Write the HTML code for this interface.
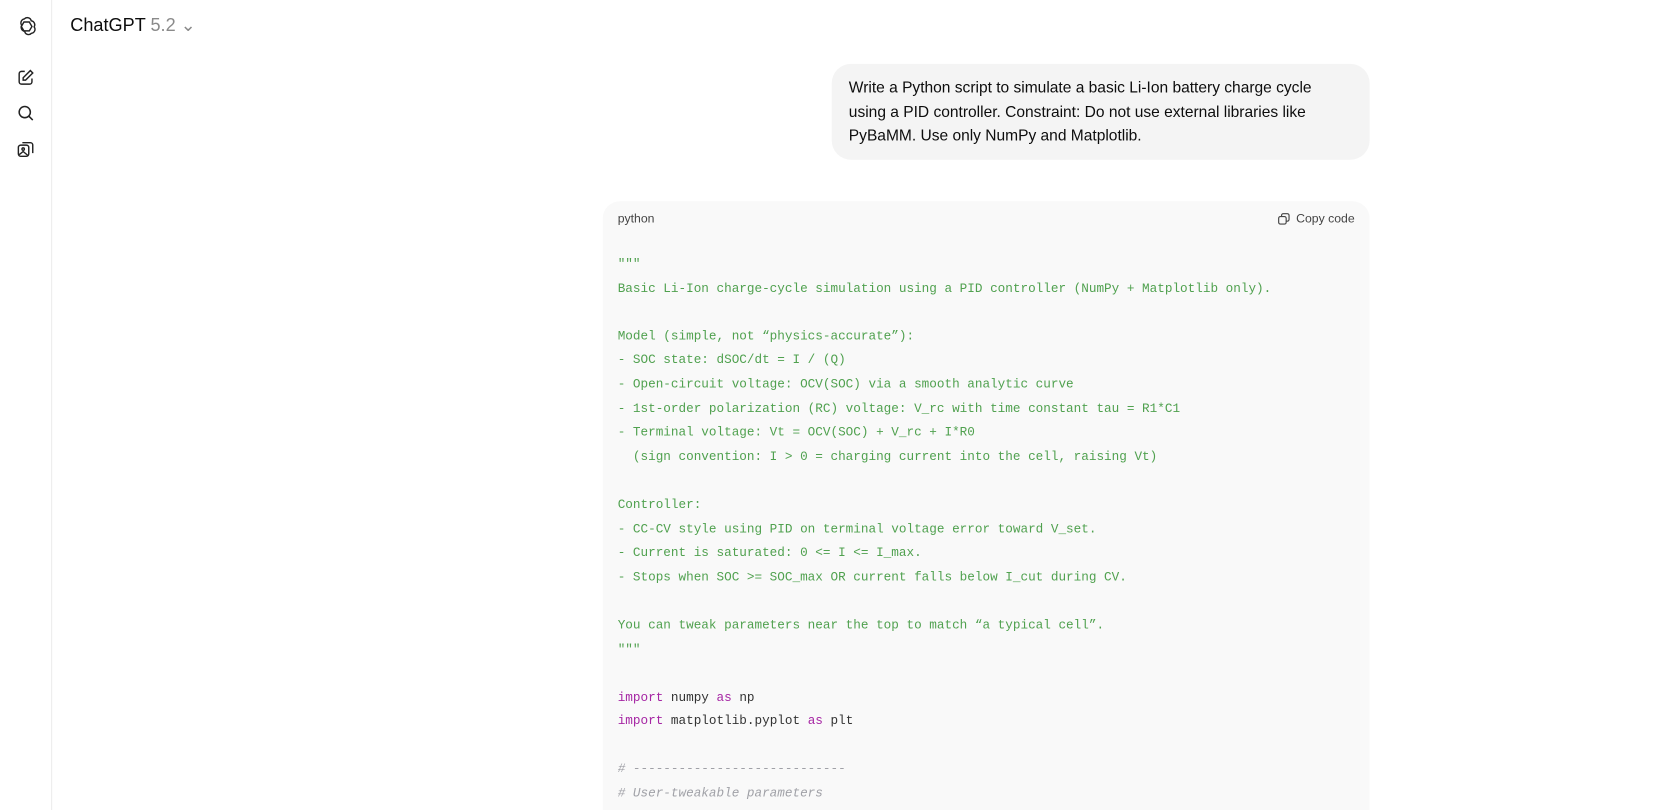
<!DOCTYPE html>
<html style="width:1670px;height:810px;overflow:hidden"><head><meta charset="utf-8"><style>
*{margin:0;padding:0;box-sizing:border-box}
body{width:1670px;height:810px;overflow:hidden;background:#fff;font-family:"Liberation Sans",sans-serif;color:#0d0d0d;position:relative}
#w{position:absolute;left:0;top:0;width:1568px;height:761px;overflow:hidden;transform:scale(1.065);transform-origin:0 0}
.side{position:absolute;left:0;top:0;width:49px;height:761px;border-right:1px solid #ececec;background:#fff}
.side svg{position:absolute;left:15px}
.title{position:absolute;left:66px;top:14px;font-size:17px;color:#0d0d0d}
.title span{color:#8a8a8a}
.bubble{position:absolute;left:781px;top:60px;width:505px;height:90px;background:#f4f4f4;border-radius:18px;padding:12px 30px 12px 16px;font-size:14.6px;line-height:22.5px}
.code{position:absolute;left:566px;top:189px;width:720px;height:600px;background:#f9f9f9;border-radius:16px}
.hdr{position:absolute;left:14px;top:11px;font-size:11.5px;color:#444}
.copy{position:absolute;right:14px;top:10px;font-size:11.5px;color:#444;display:flex;align-items:center;gap:5px}
pre{position:absolute;left:14px;top:48px;font-family:"Liberation Mono",monospace;font-size:11.9px;line-height:22.6px;color:#333}
.g{color:#50a14f}.k{color:#a626a4}.c{color:#a0a1a7;font-style:italic}
</style></head><body><div id="w">
<div class="side">
<svg style="top:14px" width="20" height="20" viewBox="0 0 24 24" fill="none" stroke="#222" stroke-width="1.6"><path d="M9.5 4.5a4.5 4.5 0 0 1 7.7 2.2 4.5 4.5 0 0 1 3.3 6.8 4.5 4.5 0 0 1-3 7.2 4.5 4.5 0 0 1-7.7-2.2 4.5 4.5 0 0 1-3.3-6.8 4.5 4.5 0 0 1 3-7.2z"/><path d="M9 8l6 0 3 5-3 5H9l-3-5z"/></svg>
<svg style="top:64px" width="18" height="18" viewBox="0 0 24 24" fill="none" stroke="#222" stroke-width="1.8"><path d="M11 4H7a3 3 0 0 0-3 3v10a3 3 0 0 0 3 3h10a3 3 0 0 0 3-3v-4"/><path d="M18 3l3 3-9 9H9v-3z"/></svg>
<svg style="top:97px" width="18" height="18" viewBox="0 0 24 24" fill="none" stroke="#222" stroke-width="1.9"><circle cx="11" cy="11" r="7"/><path d="M16 16l5 5"/></svg>
<svg style="top:131px" width="18" height="18" viewBox="0 0 24 24" fill="none" stroke="#222" stroke-width="1.8"><rect x="3" y="7" width="13" height="14" rx="3"/><path d="M8 4h10a3 3 0 0 1 3 3v10"/><circle cx="9" cy="12" r="1.5"/><path d="M4 19l5-4 6 5"/></svg>
</div>
<div class="title">ChatGPT <span>5.2 ⌄</span></div>
<div class="bubble">Write a Python script to simulate a basic Li-Ion battery charge cycle using a PID controller. Constraint: Do not use external libraries like PyBaMM. Use only NumPy and Matplotlib.</div>
<div class="code">
<div class="hdr">python</div>
<div class="copy"><svg width="13" height="13" viewBox="0 0 24 24" fill="none" stroke="#444" stroke-width="2"><rect x="3" y="8" width="13" height="13" rx="3"/><path d="M8 8V6a3 3 0 0 1 3-3h7a3 3 0 0 1 3 3v7a3 3 0 0 1-3 3h-2"/></svg>Copy code</div>
<pre><span class="g">"""
Basic Li-Ion charge-cycle simulation using a PID controller (NumPy + Matplotlib only).

Model (simple, not “physics-accurate”):
- SOC state: dSOC/dt = I / (Q)
- Open-circuit voltage: OCV(SOC) via a smooth analytic curve
- 1st-order polarization (RC) voltage: V_rc with time constant tau = R1*C1
- Terminal voltage: Vt = OCV(SOC) + V_rc + I*R0
  (sign convention: I &gt; 0 = charging current into the cell, raising Vt)

Controller:
- CC-CV style using PID on terminal voltage error toward V_set.
- Current is saturated: 0 &lt;= I &lt;= I_max.
- Stops when SOC &gt;= SOC_max OR current falls below I_cut during CV.

You can tweak parameters near the top to match “a typical cell”.
"""</span>

<span class="k">import</span> numpy <span class="k">as</span> np
<span class="k">import</span> matplotlib.pyplot <span class="k">as</span> plt

<span class="c"># ----------------------------
# User-tweakable parameters</span></pre>
</div>
</div></body></html>
